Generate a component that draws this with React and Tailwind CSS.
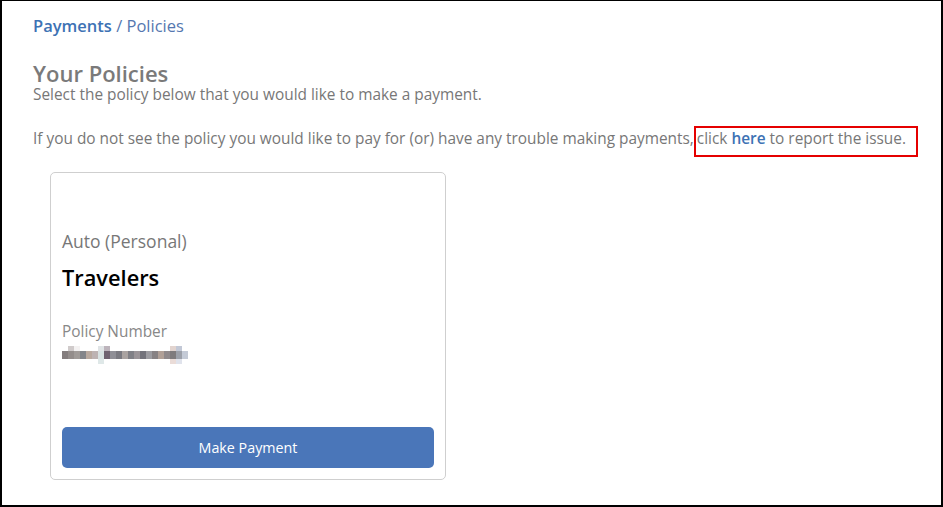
const mosaic = [
  ["#fff", "#d0cbcb", "#f4f2f2", "#fff", "#fff", "#fff", "#e0e4e6", "#bdb4bc", "#fff", "#fff", "#fff", "#fff", "#fff", "#fff", "#fff", "#fff", "#fff", "#fff", "#e2d4cf", "#c2c8d6", "#fff", "#fff"],
  ["#847e7e", "#938d8b", "#a09b98", "#83858a", "#b8a99f", "#bdb3b3", "#d8e2e2", "#6f6270", "#8f8f96", "#7a7a81", "#aaa3a1", "#808086", "#9a9498", "#73737b", "#9c9ca1", "#878284", "#b0a097", "#8f898b", "#7f7b7d", "#9ca0a9", "#c4cad6", "#fff"],
  ["#fff", "#fff", "#fff", "#fff", "#fff", "#fff", "#dfe8e8", "#fff", "#fff", "#fff", "#fff", "#fff", "#fff", "#fff", "#fff", "#fff", "#fff", "#fff", "#eadcd8", "#e0e3ec", "#fff", "#fff"],
];
const rowHeights = ["h-[5px]", "h-[8px]", "h-[5px]"];

export default function App() {
  return (
    <div
      className="w-[943px] h-[507px] bg-white border-l-2 border-t border-r-2 border-b-2 border-black overflow-hidden"
      style={{ fontFamily: '"Open Sans", sans-serif' }}
    >
      <div className="pl-[31px] pr-6 pt-[14px] text-[#777]">
        {/* Breadcrumb */}
        <div className="text-[16.5px] leading-[22px]">
          <span className="font-semibold text-[#3d72b4]">Payments</span>
          <span className="text-[#5577b0]"> / Policies</span>
        </div>

        <h1 className="mt-[25px] text-[22px] leading-[22px] font-semibold text-[#7a7a7a]">Your Policies</h1>
        <p className="mt-[1px] text-[15.4px] leading-[20px]">Select the policy below that you would like to make a payment.</p>

        <div className="mt-[24px] text-[15.4px] leading-[20px] flex items-start whitespace-nowrap">
          <span>If you do not see the policy you would like to pay for (or) have any trouble making payments,</span>
          <span className="-mt-[3px] border-2 border-[#e50000] pl-[1px] pr-[10px] pt-[1px] pb-[6px]">
            click <a className="font-semibold text-[#3d72b4]">here</a> to report the issue.
          </span>
        </div>

        {/* Policy card */}
        <div className="mt-[15px] ml-[17px] w-[396px] h-[308px] border border-[#cfcfcf] rounded-[5px] px-[11px] flex flex-col">
          <div className="mt-[56px] text-[17.5px] leading-[24px] text-[#777]">Auto (Personal)</div>
          <div className="mt-[11px] text-[21.8px] leading-[28px] font-semibold text-black">Travelers</div>
          <div className="mt-[30px] text-[15.4px] leading-[20px] text-[#888]">Policy Number</div>
          <div className="mt-[4px] flex flex-col">
            {mosaic.map((row, r) => (
              <div key={r} className="flex">
                {row.map((c, i) => (
                  <div key={i} className={`w-[6px] ${rowHeights[r]}`} style={{ backgroundColor: c }} />
                ))}
              </div>
            ))}
          </div>
          <button className="mt-auto mb-[11px] h-[41px] w-full rounded-[5px] bg-[#4a76b9] text-white text-[14.3px]">
            Make Payment
          </button>
        </div>
      </div>
    </div>
  );
}
